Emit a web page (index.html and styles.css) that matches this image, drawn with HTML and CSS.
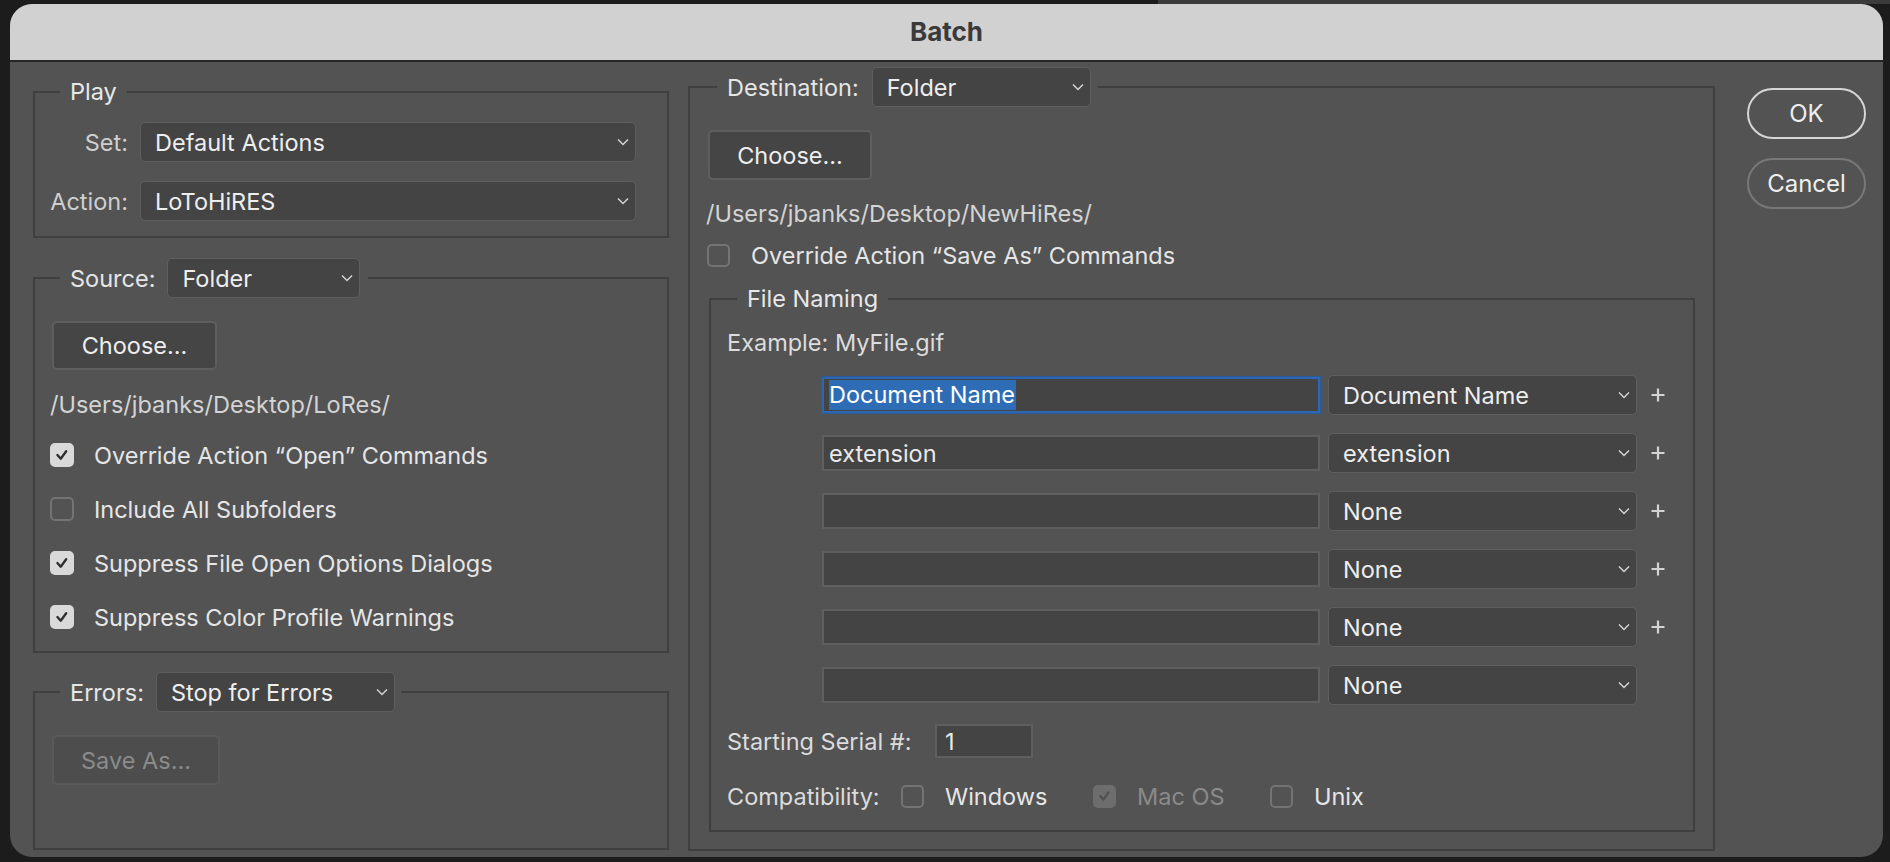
FILE: index.html
```html
<!DOCTYPE html>
<html lang="en">
<head>
<meta charset="utf-8">
<title>Batch</title>
<link rel="stylesheet" href="styles.css">
</head>
<body>
<div class="dialog">
  <div class="titlebar">Batch</div>
  <div class="content">
    <div class="col-left">
      <fieldset class="group play">
        <legend class="legend-text">Play</legend>
        <div class="play-body">
          <div class="field-row">
            <span class="field-label">Set:</span>
            <div class="select grow"><span>Default Actions</span><svg class="chev" viewBox="0 0 12 8"><polyline points="1,1.5 6,6.5 11,1.5"/></svg></div>
          </div>
          <div class="field-row">
            <span class="field-label">Action:</span>
            <div class="select grow"><span>LoToHiRES</span><svg class="chev" viewBox="0 0 12 8"><polyline points="1,1.5 6,6.5 11,1.5"/></svg></div>
          </div>
        </div>
      </fieldset>

      <fieldset class="group source">
        <legend class="legend-ctl">
          <div class="legend-inner">
            <span>Source:</span>
            <div class="select sel-source"><span>Folder</span><svg class="chev" viewBox="0 0 12 8"><polyline points="1,1.5 6,6.5 11,1.5"/></svg></div>
          </div>
        </legend>
        <div class="source-body">
          <div class="btn btn-choose-l">Choose...</div>
          <div class="path">/Users/jbanks/Desktop/LoRes/</div>
          <div class="checks">
            <div class="check-row"><span class="cb checked"><svg viewBox="0 0 24 24"><polyline points="6.5,12 10.5,16.5 17,7.5"/></svg></span><span>Override Action “Open” Commands</span></div>
            <div class="check-row"><span class="cb"></span><span>Include All Subfolders</span></div>
            <div class="check-row"><span class="cb checked"><svg viewBox="0 0 24 24"><polyline points="6.5,12 10.5,16.5 17,7.5"/></svg></span><span>Suppress File Open Options Dialogs</span></div>
            <div class="check-row"><span class="cb checked"><svg viewBox="0 0 24 24"><polyline points="6.5,12 10.5,16.5 17,7.5"/></svg></span><span>Suppress Color Profile Warnings</span></div>
          </div>
        </div>
      </fieldset>

      <fieldset class="group errors">
        <legend class="legend-ctl errors-legend">
          <div class="legend-inner">
            <span>Errors:</span>
            <div class="select sel-errors"><span>Stop for Errors</span><svg class="chev" viewBox="0 0 12 8"><polyline points="1,1.5 6,6.5 11,1.5"/></svg></div>
          </div>
        </legend>
        <div class="errors-body">
          <div class="btn btn-disabled">Save As...</div>
        </div>
      </fieldset>
    </div>

    <div class="col-right">
      <fieldset class="group dest">
        <legend class="legend-ctl dest-legend">
          <div class="legend-inner dest-inner">
            <span>Destination:</span>
            <div class="select sel-dest"><span>Folder</span><svg class="chev" viewBox="0 0 12 8"><polyline points="1,1.5 6,6.5 11,1.5"/></svg></div>
          </div>
        </legend>
        <div class="dest-body">
          <div class="btn btn-choose-r">Choose...</div>
          <div class="path path-r">/Users/jbanks/Desktop/NewHiRes/</div>
          <div class="check-row check-saveas"><span class="cb cb-sm"></span><span>Override Action “Save As” Commands</span></div>

          <fieldset class="group naming">
            <legend class="legend-text naming-legend">File Naming</legend>
            <div class="naming-body">
              <div class="example">Example: MyFile.gif</div>
              <div class="name-rows">
                <div class="name-row">
                  <div class="textbox focused"><span class="sel-text">Document Name</span></div>
                  <div class="select sel-name"><span>Document Name</span><svg class="chev" viewBox="0 0 12 8"><polyline points="1,1.5 6,6.5 11,1.5"/></svg></div>
                  <svg class="plus" viewBox="0 0 14 14"><path d="M7 0.5V13.5M0.5 7H13.5"/></svg>
                </div>
                <div class="name-row">
                  <div class="textbox"><span>extension</span></div>
                  <div class="select sel-name"><span>extension</span><svg class="chev" viewBox="0 0 12 8"><polyline points="1,1.5 6,6.5 11,1.5"/></svg></div>
                  <svg class="plus" viewBox="0 0 14 14"><path d="M7 0.5V13.5M0.5 7H13.5"/></svg>
                </div>
                <div class="name-row">
                  <div class="textbox"></div>
                  <div class="select sel-name"><span>None</span><svg class="chev" viewBox="0 0 12 8"><polyline points="1,1.5 6,6.5 11,1.5"/></svg></div>
                  <svg class="plus" viewBox="0 0 14 14"><path d="M7 0.5V13.5M0.5 7H13.5"/></svg>
                </div>
                <div class="name-row">
                  <div class="textbox"></div>
                  <div class="select sel-name"><span>None</span><svg class="chev" viewBox="0 0 12 8"><polyline points="1,1.5 6,6.5 11,1.5"/></svg></div>
                  <svg class="plus" viewBox="0 0 14 14"><path d="M7 0.5V13.5M0.5 7H13.5"/></svg>
                </div>
                <div class="name-row">
                  <div class="textbox"></div>
                  <div class="select sel-name"><span>None</span><svg class="chev" viewBox="0 0 12 8"><polyline points="1,1.5 6,6.5 11,1.5"/></svg></div>
                  <svg class="plus" viewBox="0 0 14 14"><path d="M7 0.5V13.5M0.5 7H13.5"/></svg>
                </div>
                <div class="name-row">
                  <div class="textbox"></div>
                  <div class="select sel-name"><span>None</span><svg class="chev" viewBox="0 0 12 8"><polyline points="1,1.5 6,6.5 11,1.5"/></svg></div>
                </div>
              </div>
              <div class="serial-row">
                <span class="serial-label">Starting Serial #:</span>
                <div class="textbox serial-box"><span>1</span></div>
              </div>
              <div class="compat-row">
                <span class="compat-label">Compatibility:</span>
                <div class="compat-item win"><span class="cb cb-sm"></span><span>Windows</span></div>
                <div class="compat-item mac"><span class="cb cb-sm dis"><svg viewBox="0 0 24 24"><polyline points="6.5,12 10.5,16.5 17,7.5"/></svg></span><span class="dim">Mac OS</span></div>
                <div class="compat-item"><span class="cb cb-sm"></span><span>Unix</span></div>
              </div>
            </div>
          </fieldset>
        </div>
      </fieldset>
    </div>

    <div class="col-buttons">
      <div class="pill ok">OK</div>
      <div class="pill cancel">Cancel</div>
    </div>
  </div>
</div>
</body>
</html>
```

FILE: styles.css
```css
* { box-sizing: border-box; }
html, body { margin: 0; padding: 0; }
body {
  width: 1890px;
  height: 862px;
  overflow: hidden;
  background:
    linear-gradient(to right, #1c1c1c 1158px, #3b3b3b 1158px) 0 0 / 100% 4px no-repeat,
    #1c1c1c;
  font-family: Inter, "Noto Sans", sans-serif;
  font-size: 23.5px;
  color: #e6e6e6;
}
.dialog {
  margin: 4px 0 0 10px;
  width: 1873px;
  height: 853px;
  background: #535353;
  border-radius: 22px;
  overflow: hidden;
}
.titlebar {
  height: 58px;
  line-height: 56px;
  background: #d1d1d1;
  border-bottom: 2px solid #262626;
  text-align: center;
  font-weight: 700;
  font-size: 26px;
  color: #3a3a3a;
}
.content {
  display: flex;
  align-items: flex-start;
  padding-left: 23px;
}
.col-left { width: 636px; padding-top: 17px; flex: none; }
.col-right { width: 1027px; margin-left: 19px; padding-top: 5px; flex: none; }
.col-buttons {
  width: 119px;
  margin-left: 32px;
  padding-top: 26px;
  display: flex;
  flex-direction: column;
  gap: 19px;
  flex: none;
}

/* group boxes */
.group {
  margin: 0;
  padding: 0;
  border: 2px solid #3f3f3f;
  min-width: 0;
}
legend { padding: 0; }
.legend-text {
  margin-left: 25px;
  padding: 0 10px;
  line-height: 26px;
  color: #e8e8e8;
}
.legend-ctl {
  margin-left: 25px;
  padding: 0 8px 0 10px;
}
.legend-inner {
  display: flex;
  align-items: center;
  gap: 12px;
  height: 40px;
}
.group.source { margin-top: 20px; }
.group.errors { margin-top: 19px; }
.errors-legend { padding-right: 6px; }
.dest-legend { margin-left: 27px; padding-right: 7px; }
.dest-inner { gap: 13px; }

/* selects */
.select {
  height: 40px;
  background: #444444;
  border: 1.5px solid #5f5f5f;
  border-radius: 5px;
  display: flex;
  align-items: center;
  justify-content: space-between;
  padding: 0 6px 0 14px;
  color: #eeeeee;
  flex: none;
}
.select.grow { flex: 1; }
.chev {
  width: 12px;
  height: 8px;
  fill: none;
  stroke: #d4d4d4;
  stroke-width: 1.5;
}
.sel-source { width: 193px; }
.sel-errors { width: 239px; }
.sel-dest { width: 219px; }
.sel-name { width: 309px; }

/* play */
.play-body {
  padding: 17px 31px 15px 0;
  display: flex;
  flex-direction: column;
  gap: 19px;
}
.field-row {
  display: flex;
  align-items: center;
  gap: 12px;
}
.field-label {
  width: 93px;
  text-align: right;
  color: #cfcfcf;
  flex: none;
}

/* buttons */
.btn {
  display: flex;
  align-items: center;
  justify-content: center;
  background: #454545;
  border: 2px solid #5e5e5e;
  border-radius: 5px;
  color: #eeeeee;
}
.btn-choose-l { width: 165px; height: 49px; }
.btn-choose-r { width: 164px; height: 50px; }
.btn-disabled {
  width: 168px;
  height: 50px;
  background: #4d4d4d;
  border-color: #5a5a5a;
  color: #8b8b8b;
}

/* source */
.source-body { padding: 23px 16px 19px 17px; }
.path {
  margin-top: 20px;
  line-height: 30px;
  color: #d4d4d4;
  margin-left: -2px;
}
.checks {
  margin-top: 20px;
  display: flex;
  flex-direction: column;
  gap: 24px;
}
.check-row {
  display: flex;
  align-items: center;
  gap: 20px;
  height: 30px;
  margin-left: -2px;
}
.cb {
  width: 24px;
  height: 24px;
  border-radius: 5px;
  border: 2px solid #747474;
  flex: none;
  display: flex;
  align-items: center;
  justify-content: center;
}
.cb svg {
  width: 22px;
  height: 22px;
  fill: none;
  stroke: #2e2e2e;
  stroke-width: 2.8;
  stroke-linecap: round;
  stroke-linejoin: round;
}
.cb.checked { background: #d9d9d9; border-color: #d9d9d9; }
.cb.dis { background: #6d6d6d; border-color: #6d6d6d; }
.cb.dis svg { stroke: #505050; }
.cb-sm { width: 23px; height: 23px; }

/* errors */
.errors-body { padding: 23px 0 63px 17px; }

/* destination */
.dest-body { padding: 23px 18px 17px 18px; }
.path-r { margin-top: 19px; }
.check-saveas { margin-top: 11px; gap: 21px; margin-left: -1px; }
.group.naming { margin-top: 16px; margin-left: 1px; }
.naming-legend { margin-left: 26px; }
.naming-body { padding: 16px 0 19px 16px; }
.example { line-height: 30px; color: #dcdcdc; }
.name-rows {
  margin-top: 17px;
  display: flex;
  flex-direction: column;
  gap: 18px;
}
.name-row {
  display: flex;
  align-items: center;
  height: 40px;
  padding-left: 95px;
}
.textbox {
  width: 498px;
  height: 36px;
  background: #444444;
  border: 2px solid #5f5f5f;
  margin-right: 8px;
  display: flex;
  align-items: center;
  padding-left: 5px;
  color: #eaeaea;
  flex: none;
}
.textbox.focused {
  border-color: #2f66b0;
  box-shadow: 0 0 0 1px #2a5b9c;
}
.sel-text {
  background: #2e6db5;
  color: #ffffff;
  line-height: 30px;
  padding-right: 1px;
}
.plus {
  width: 14px;
  height: 14px;
  margin-left: 14px;
  fill: none;
  stroke: #d4d4d4;
  stroke-width: 2.2;
  flex: none;
}
.serial-row {
  margin-top: 19px;
  display: flex;
  align-items: center;
  height: 34px;
}
.serial-label { width: 208px; flex: none; color: #dcdcdc; }
.serial-box {
  width: 98px;
  height: 34px;
  padding-left: 8px;
  margin-right: 0;
}
.compat-row {
  margin-top: 23px;
  display: flex;
  align-items: center;
  height: 30px;
}
.compat-label { width: 174px; flex: none; color: #dcdcdc; }
.compat-item {
  display: flex;
  align-items: center;
  gap: 21px;
  flex: none;
}
.compat-item.win { width: 192px; }
.compat-item.mac { width: 177px; }
.dim { color: #8a8a8a; }

/* OK / Cancel */
.pill {
  height: 51px;
  border-radius: 26px;
  display: flex;
  align-items: center;
  justify-content: center;
  color: #eeeeee;
  font-size: 24px;
}
.ok { border: 2px solid #d6d6d6; }
.cancel { border: 2px solid #787878; }
```
